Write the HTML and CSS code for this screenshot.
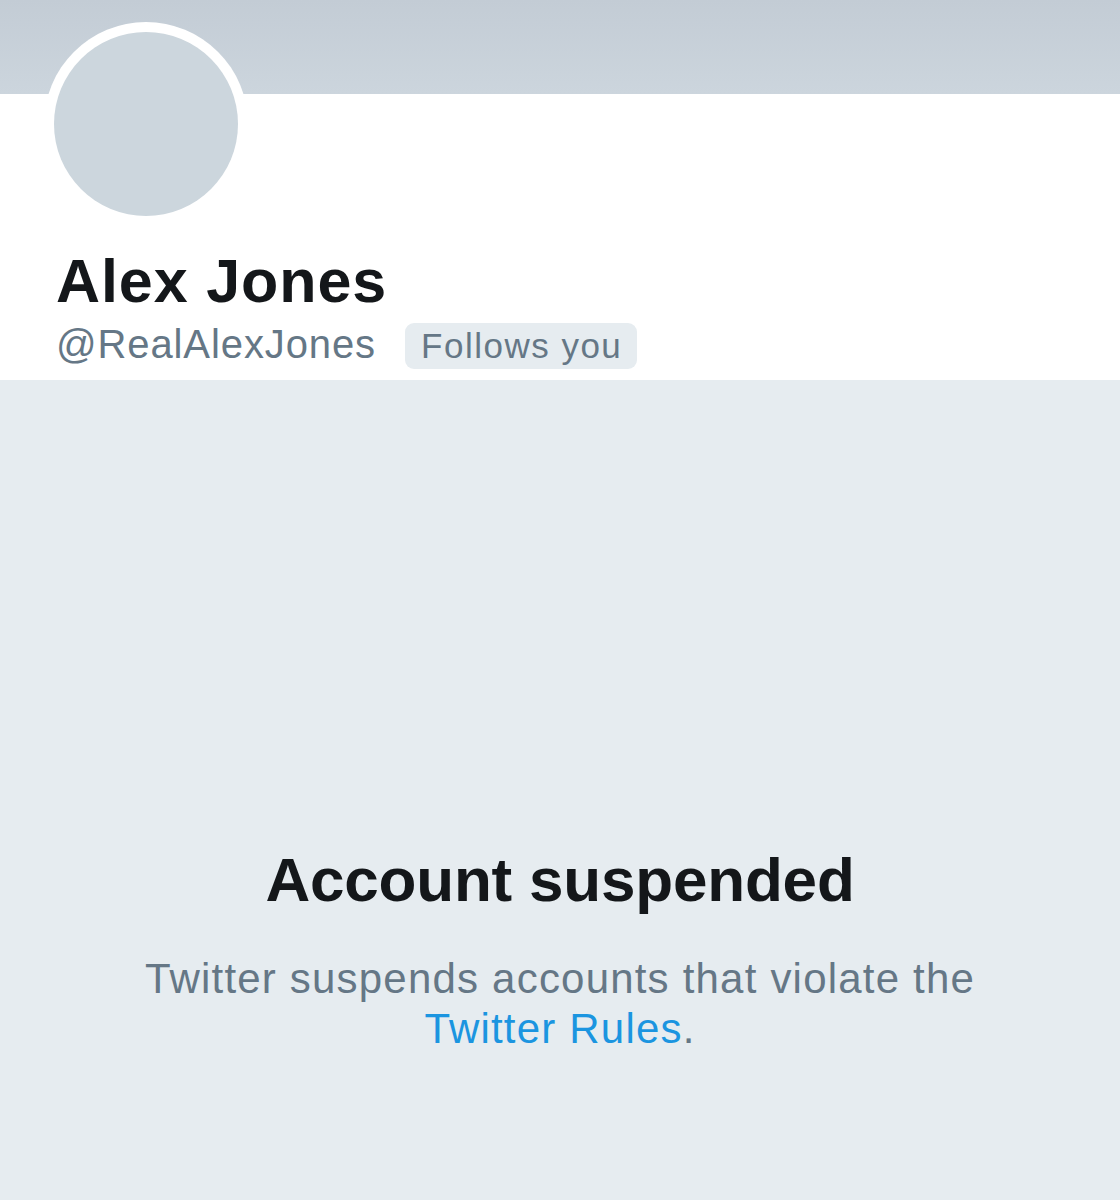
FILE: index.html
```html
<!DOCTYPE html>
<html lang="en">
<head>
<meta charset="utf-8">
<title>Alex Jones (@RealAlexJones)</title>
<link rel="stylesheet" href="styles.css">
</head>
<body>
<div class="page">
  <header class="profile">
    <div class="banner"></div>
    <div class="avatar"><div class="avatar-inner"></div></div>
    <div class="identity">
      <h1 class="name">Alex Jones</h1>
      <div class="handle-row">
        <span class="handle">@RealAlexJones</span>
        <span class="follows">Follows you</span>
      </div>
    </div>
  </header>
  <main class="suspended">
    <h2 class="title">Account suspended</h2>
    <p class="desc">Twitter suspends accounts that violate the <a class="link" href="#">Twitter Rules</a>.</p>
  </main>
</div>
</body>
</html>
```
FILE: styles.css
```css
html, body {
  margin: 0;
  padding: 0;
  background: #e6ecf0;
}
.page {
  width: 1120px;
  height: 1200px;
  display: flex;
  flex-direction: column;
  font-family: "Liberation Sans", Arial, sans-serif;
  overflow: hidden;
}
.profile {
  position: relative;
  background: #ffffff;
  height: 380px;
  flex: none;
}
.banner {
  height: 94px;
  background: linear-gradient(#c3ccd5, #ccd5dd);
}
.avatar {
  position: absolute;
  left: 44px;
  top: 22px;
  width: 204px;
  height: 204px;
  border-radius: 50%;
  background: #ffffff;
  display: flex;
  align-items: center;
  justify-content: center;
}
.avatar-inner {
  width: 184px;
  height: 184px;
  border-radius: 50%;
  background: #ccd6dd;
}
.identity {
  padding: 155px 0 0 56px;
}
.name {
  margin: 0;
  font-size: 61px;
  line-height: 64px;
  font-weight: 700;
  letter-spacing: 0.9px;
  color: #14171a;
}
.handle-row {
  display: flex;
  align-items: flex-start;
  margin-top: 8px;
}
.handle {
  font-size: 40px;
  line-height: 46px;
  color: #657786;
  letter-spacing: 0.9px;
}
.follows {
  margin: 2px 0 0 29px;
  background: #e6ecf0;
  border-radius: 9px;
  padding: 0 15px 0 16px;
  height: 46px;
  line-height: 46px;
  font-size: 35px;
  color: #657786;
  letter-spacing: 1.5px;
}
.suspended {
  flex: 1;
  background: #e6ecf0;
  display: flex;
  flex-direction: column;
  align-items: center;
  text-align: center;
  padding-top: 465px;
}
.title {
  margin: 0;
  font-size: 62px;
  line-height: 70px;
  font-weight: 700;
  color: #14171a;
  letter-spacing: -0.2px;
}
.desc {
  margin: 39px 0 0;
  width: 880px;
  font-size: 42px;
  line-height: 50px;
  color: #657786;
  letter-spacing: 1.2px;
}
.link {
  color: #1b95e0;
  text-decoration: none;
}
```
